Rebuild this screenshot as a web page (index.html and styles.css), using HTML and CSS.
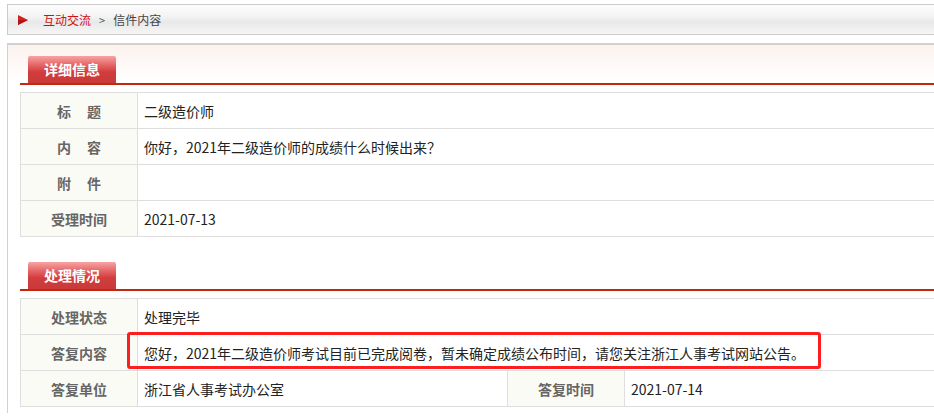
FILE: index.html
```html
<!DOCTYPE html>
<html lang="zh-CN">
<head>
  <meta charset="UTF-8" />
  <title>信件内容</title>
  <link rel="stylesheet" href="styles.css">
</head>
<body>
  <div class="crumb">
    <svg class="crumb-arrow" width="10" height="10" viewBox="0 0 10 10"><polygon points="0,0 10,5 0,10" fill="#d42222"/><polygon points="0,5 10,5 0,10" fill="#b01515"/></svg>
    <a href="#">互动交流</a>
    <span class="sep">&gt;</span>
    <span>信件内容</span>
  </div>

  <div class="panel">
    <div class="tab-bar"><span class="tab">详细信息</span></div>
    <table class="info">
      <tr><th>标&nbsp;&nbsp;&nbsp;&nbsp;&nbsp;题</th><td>二级造价师</td></tr>
      <tr><th>内&nbsp;&nbsp;&nbsp;&nbsp;&nbsp;容</th><td>你好，2021年二级造价师的成绩什么时候出来？</td></tr>
      <tr><th>附&nbsp;&nbsp;&nbsp;&nbsp;&nbsp;件</th><td></td></tr>
      <tr><th>受理时间</th><td>2021-07-13</td></tr>
    </table>

    <div class="tab-bar second"><span class="tab">处理情况</span></div>
    <table class="info">
      <colgroup><col class="c-label"><col class="c-mid"><col class="c-label"><col></colgroup>
      <tr><th>处理状态</th><td colspan="3">处理完毕</td></tr>
      <tr><th>答复内容</th><td colspan="3" class="marked">您好，2021年二级造价师考试目前已完成阅卷，暂未确定成绩公布时间，请您关注浙江人事考试网站公告。<span class="mark"></span></td></tr>
      <tr><th>答复单位</th><td>浙江省人事考试办公室</td><th>答复时间</th><td>2021-07-14</td></tr>
    </table>
  </div>
</body>
</html>
```

FILE: styles.css
```css
* { box-sizing: border-box; }
html, body { overflow: hidden; }
body {
  margin: 0;
  padding-top: 4px;
  background: #fff;
  color: #222;
  font-family: "Noto Sans CJK SC", "Liberation Sans", sans-serif;
}
.crumb {
  margin: 0 -40px 0 7px;
  height: 31px;
  border: 1px solid #cbcbcb;
  background: linear-gradient(#fdfdfd, #f3f3f3 40%, #e8e8e8 60%, #f6f6f6);
  display: flex;
  align-items: center;
  padding-left: 10px;
  font-size: 12px;
  color: #444;
}
.crumb-arrow { margin-right: 15px; }
.crumb a { color: #cc1111; text-decoration: none; }
.crumb .sep { margin: 0 8px; font-size: 11px; color: #555; }
.panel {
  margin: 8px -40px 0 7px;
  border-top: 2px solid #d0d0d0;
  border-left: 1px solid #d0d0d0;
  background: linear-gradient(#fcf2ee, #fff 36px);
  padding: 11px 0 6px 12px;
}
.tab-bar {
  border-bottom: 2px solid #c3280d;
  padding-left: 8px;
  height: 29px;
  display: flex;
  align-items: flex-end;
}
.tab-bar.second { margin-top: 25px; }
.tab {
  width: 88px;
  height: 27px;
  border-radius: 2px 2px 0 0;
  background: linear-gradient(#f8a3a3, #e05a5a 40%, #d23c3c 60%, #c93a3a);
  color: #fff;
  font-weight: bold;
  font-size: 14px;
  line-height: 27px;
  text-align: center;
}
.info {
  margin-top: 7px;
  width: 100%;
  border-collapse: collapse;
  font-size: 14px;
}
.info th, .info td {
  border: 1px solid #dedede;
  height: 36px;
  padding: 0 0 0 6px;
  vertical-align: middle;
}
.info th {
  width: 117px;
  padding: 0;
  background: #fbfbf5;
  color: #666;
  font-weight: bold;
  text-align: center;
  white-space: nowrap;
}
.c-label { width: 117px; }
.c-mid { width: 370px; }
.marked { position: relative; }
.mark {
  position: absolute;
  left: -11px;
  top: -3px;
  width: 694px;
  height: 37px;
  border: 3px solid #fd1f1f;
  border-radius: 3px;
}
```
